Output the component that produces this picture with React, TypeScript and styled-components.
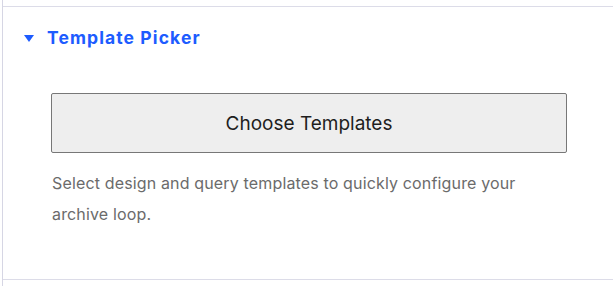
import React from 'react';
import styled, { createGlobalStyle } from 'styled-components';

const GlobalStyle = createGlobalStyle`
  html, body {
    margin: 0;
    padding: 0;
    background: #ffffff;
  }
  body {
    font-family: Inter, "Noto Sans", "Liberation Sans", sans-serif;
  }
`;

function App() {
  return (
    <>
      <GlobalStyle />
      <Sidebar>
        <Panel>
          <PanelHeader>
            <Caret />
            <PanelTitle>Template Picker</PanelTitle>
          </PanelHeader>
          <PanelBody>
            <ChooseButton type="button">Choose Templates</ChooseButton>
            <Help>
              Select design and query templates to quickly configure your archive loop.
            </Help>
          </PanelBody>
        </Panel>
      </Sidebar>
    </>
  );
}

const Sidebar = styled.div`
  margin-left: 2px;
  height: 286px;
  border-left: 1px solid #d6d6e4;
  padding-top: 6px;
  box-sizing: border-box;
  overflow: hidden;
`;

const Panel = styled.section`
  border-top: 1px solid #dcdce8;
  border-bottom: 1px solid #dcdce8;
`;

const PanelHeader = styled.div`
  display: flex;
  align-items: center;
  gap: 13px;
  padding: 20px 0 0 21px;
  height: 22px;
`;

const Caret = styled.span`
  width: 0;
  height: 0;
  border-left: 5px solid transparent;
  border-right: 5px solid transparent;
  border-top: 7px solid #1d5cff;
  margin-top: 1px;
`;

const PanelTitle = styled.h2`
  margin: 0;
  font-size: 17.5px;
  letter-spacing: 1.1px;
  line-height: 22px;
  font-weight: 700;
  color: #1d5cff;
`;

const PanelBody = styled.div`
  padding: 44px 46px 49px 48px;
`;

const ChooseButton = styled.button`
  display: block;
  width: 100%;
  height: 60px;
  background: #eeeeee;
  border: 1px solid #777777;
  border-radius: 2px;
  font-family: Inter, "Noto Sans", "Liberation Sans", sans-serif;
  font-size: 19px;
  color: #1e1e1e;
  cursor: pointer;
`;

const Help = styled.p`
  margin: 15px 0 0 1px;
  font-size: 16px;
  letter-spacing: 0.15px;
  line-height: 31px;
  color: #6b6b6b;
  max-width: 480px;
`;

export default App;
